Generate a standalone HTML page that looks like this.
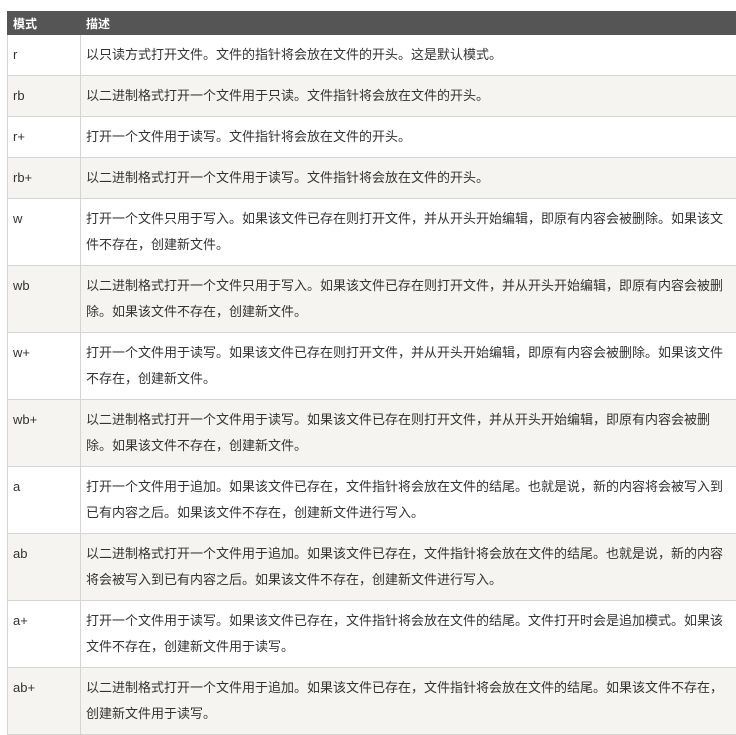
<!DOCTYPE html>
<html><head><meta charset="utf-8"><style>
body{margin:0;background:#fff;font-family:"Liberation Sans","Noto Sans CJK SC",sans-serif;font-size:13px;color:#333;}
table{position:absolute;left:7px;top:11px;border-collapse:collapse;width:736px;table-layout:fixed;}
th{background:#555;color:#fff;text-align:left;font-weight:bold;height:22px;padding:0 5px;border:1px solid #555;font-size:12px;}
td{border:1px solid #d4d4d4;padding:7px 5px;line-height:26px;vertical-align:top;}
td+td{padding-right:15px;}
tr.a td{background:#f6f4f0;}
tr.s td{height:26px;}
tr.d td{height:52px;}
</style></head><body>
<table>
<colgroup><col style="width:73px"><col></colgroup>
<tr><th>模式</th><th>描述</th></tr>
<tr class="s"><td>r</td><td>以只读方式打开文件。文件的指针将会放在文件的开头。这是默认模式。</td></tr>
<tr class="s a"><td>rb</td><td>以二进制格式打开一个文件用于只读。文件指针将会放在文件的开头。</td></tr>
<tr class="s"><td>r+</td><td>打开一个文件用于读写。文件指针将会放在文件的开头。</td></tr>
<tr class="s a"><td>rb+</td><td>以二进制格式打开一个文件用于读写。文件指针将会放在文件的开头。</td></tr>
<tr class="d"><td>w</td><td>打开一个文件只用于写入。如果该文件已存在则打开文件，并从开头开始编辑，即原有内容会被删除。如果该文件不存在，创建新文件。</td></tr>
<tr class="d a"><td>wb</td><td>以二进制格式打开一个文件只用于写入。如果该文件已存在则打开文件，并从开头开始编辑，即原有内容会被删除。如果该文件不存在，创建新文件。</td></tr>
<tr class="d"><td>w+</td><td>打开一个文件用于读写。如果该文件已存在则打开文件，并从开头开始编辑，即原有内容会被删除。如果该文件不存在，创建新文件。</td></tr>
<tr class="d a"><td>wb+</td><td>以二进制格式打开一个文件用于读写。如果该文件已存在则打开文件，并从开头开始编辑，即原有内容会被删除。如果该文件不存在，创建新文件。</td></tr>
<tr class="d"><td>a</td><td>打开一个文件用于追加。如果该文件已存在，文件指针将会放在文件的结尾。也就是说，新的内容将会被写入到已有内容之后。如果该文件不存在，创建新文件进行写入。</td></tr>
<tr class="d a"><td>ab</td><td>以二进制格式打开一个文件用于追加。如果该文件已存在，文件指针将会放在文件的结尾。也就是说，新的内容将会被写入到已有内容之后。如果该文件不存在，创建新文件进行写入。</td></tr>
<tr class="d"><td>a+</td><td>打开一个文件用于读写。如果该文件已存在，文件指针将会放在文件的结尾。文件打开时会是追加模式。如果该文件不存在，创建新文件用于读写。</td></tr>
<tr class="d a"><td>ab+</td><td>以二进制格式打开一个文件用于追加。如果该文件已存在，文件指针将会放在文件的结尾。如果该文件不存在，创建新文件用于读写。</td></tr>
</table>
</body></html>
